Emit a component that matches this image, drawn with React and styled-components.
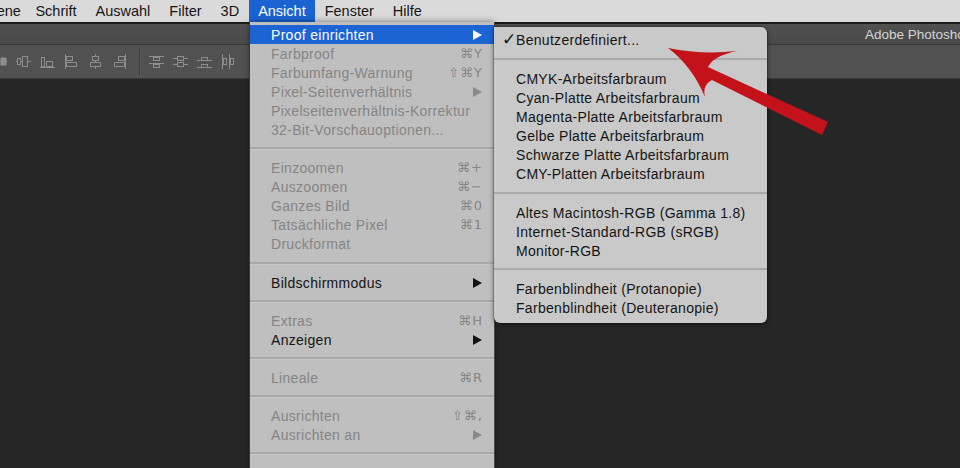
import React from "react";
import styled, { createGlobalStyle } from "styled-components";

const GlobalStyle = createGlobalStyle`
  html, body { margin: 0; padding: 0; background: #262626; overflow: hidden; }
  * { box-sizing: border-box; }
`;

const FONT = `"Liberation Sans", "DejaVu Sans", Arial, sans-serif`;

const Page = styled.div`
  position: relative;
  width: 960px;
  height: 468px;
  overflow: hidden;
  display: flex;
  flex-direction: column;
  background: #262626;
  font-family: ${FONT};
`;

const MenuBar = styled.div`
  height: 22px;
  flex: none;
  display: flex;
  align-items: stretch;
  background: #dadada;
  overflow: hidden;
`;

const MenuBarItem = styled.div`
  display: flex;
  align-items: center;
  padding: 0 9.5px;
  font-size: 14.5px;
  white-space: nowrap;
  color: ${(p) => (p.$active ? "#ffffff" : "#151515")};
  background: ${(p) => (p.$active ? "#1b63d3" : "transparent")};
  ${(p) => (p.$cut ? "margin-left: -21px; padding-left: 0; padding-right: 5px;" : "")}
`;

const TitleBar = styled.div`
  height: 23px;
  flex: none;
  border-top: 2px solid #1c1c1c;
  border-bottom: 1px solid #383838;
  background: linear-gradient(#515151, #494949);
  display: flex;
  align-items: center;
  justify-content: flex-end;
`;

const TitleText = styled.div`
  font-size: 13.5px;
  color: #d4d4d4;
  white-space: nowrap;
  margin-right: -28px;
  width: 123px;
  overflow: hidden;
`;

const OptionsBar = styled.div`
  height: 34px;
  flex: none;
  background: #515151;
  border-bottom: 1px solid #3a3a3a;
  display: flex;
  align-items: center;
  margin-left: -8px;
  gap: 9px;
`;

const ToolDivider = styled.div`
  width: 1px;
  height: 26px;
  background: #393939;
  box-shadow: 1px 0 0 #5d5d5d;
  margin-left: 3px;
`;

const Canvas = styled.div`
  flex: 1;
  background: #262626;
`;

const Dropdown = styled.div`
  position: absolute;
  left: 250px;
  top: 22px;
  width: 244px;
  height: 470px;
  background: #bfbfbf;
  padding-top: 3px;
  box-shadow: -1px 0 0 #3a3a3a, 1px 0 0 #4a4a4a, 0 0 6px rgba(0,0,0,0.5);
  display: flex;
  flex-direction: column;
  z-index: 2;
`;

const Submenu = styled.div`
  position: absolute;
  left: 494px;
  top: 27px;
  width: 273px;
  background: #c9c9c9;
  border-radius: 0 6px 6px 6px;
  padding: 3px 0 6px;
  box-shadow: 0 1px 5px rgba(0,0,0,0.55), 0 0 0 0.5px rgba(0,0,0,0.35);
  display: flex;
  flex-direction: column;
  z-index: 3;
`;

const Row = styled.div`
  height: 19px;
  flex: none;
  display: flex;
  align-items: center;
  padding: 0 12px 0 ${(p) => p.$indent || 21}px;
  font-size: 14px;
  letter-spacing: 0.3px;
  white-space: nowrap;
  color: ${(p) => (p.$active ? "#ffffff" : p.$disabled ? "#858585" : "#141414")};
  background: ${(p) => (p.$active ? "#1c63d4" : "transparent")};
`;

const Label = styled.span`
  flex: 1;
`;

const Check = styled.span`
  width: 14px;
  margin-left: -14px;
  font-size: 17px;
  line-height: 19px;
  font-family: "DejaVu Sans", sans-serif;
`;

const Shortcut = styled.span`
  font-family: "DejaVu Sans", "Liberation Sans", sans-serif;
  font-size: 13px;
  letter-spacing: 1px;
  margin-right: -1px;
`;

const Separator = styled.div`
  height: ${(p) => p.$h || 19}px;
  flex: none;
  display: flex;
  align-items: center;
  &::after {
    content: "";
    display: block;
    width: 100%;
    height: 2px;
    background: #a9a9a9;
    border-bottom: 1px solid #c6c6c6;
  }
`;

const ArrowOverlay = styled.svg`
  position: absolute;
  left: 0;
  top: 0;
  z-index: 5;
  pointer-events: none;
`;

const Tri = ({ color }) => (
  <svg width="9" height="10" viewBox="0 0 9 10">
    <polygon points="0,0 9,5 0,10" fill={color} />
  </svg>
);

const ICON = "#8d8d8d";
const ToolIcon = ({ kind }) => {
  const s = { stroke: ICON, strokeWidth: 1, fill: "none" };
  const shapes = {
    partial: (
      <>
        <line x1="0" y1="7.5" x2="15" y2="7.5" {...s} />
        <rect x="8.5" y="3.5" width="6" height="8" fill={ICON} />
      </>
    ),
    vcenter: (
      <>
        <line x1="0" y1="7.5" x2="15" y2="7.5" {...s} />
        <rect x="1.5" y="4.5" width="3" height="6" {...s} fill="#515151" />
        <rect x="6.5" y="2.5" width="5" height="10" {...s} fill="#515151" />
      </>
    ),
    bottom: (
      <>
        <line x1="0" y1="13.5" x2="15" y2="13.5" {...s} />
        <rect x="1.5" y="3.5" width="3" height="9" {...s} />
        <rect x="6.5" y="7.5" width="6" height="5" {...s} />
      </>
    ),
    left: (
      <>
        <line x1="1.5" y1="0" x2="1.5" y2="15" {...s} />
        <rect x="2.5" y="2.5" width="6" height="4" {...s} />
        <rect x="2.5" y="8.5" width="10" height="4" {...s} />
      </>
    ),
    hcenter: (
      <>
        <line x1="7.5" y1="0" x2="7.5" y2="15" {...s} />
        <rect x="4.5" y="2.5" width="6" height="4" {...s} fill="#515151" />
        <rect x="2.5" y="8.5" width="10" height="4" {...s} fill="#515151" />
      </>
    ),
    right: (
      <>
        <line x1="13.5" y1="0" x2="13.5" y2="15" {...s} />
        <rect x="6.5" y="2.5" width="6" height="4" {...s} />
        <rect x="2.5" y="8.5" width="10" height="4" {...s} />
      </>
    ),
    dtop: (
      <>
        <line x1="0" y1="2.5" x2="15" y2="2.5" {...s} />
        <line x1="0" y1="9.5" x2="15" y2="9.5" {...s} />
        <rect x="4.5" y="3.5" width="6" height="3" {...s} />
        <rect x="4.5" y="10.5" width="6" height="3" {...s} />
      </>
    ),
    dcenter: (
      <>
        <line x1="0" y1="4.5" x2="15" y2="4.5" {...s} />
        <line x1="0" y1="10.5" x2="15" y2="10.5" {...s} />
        <rect x="4.5" y="2.5" width="6" height="4" {...s} fill="#515151" />
        <rect x="4.5" y="8.5" width="6" height="4" {...s} fill="#515151" />
      </>
    ),
    dbottom: (
      <>
        <line x1="0" y1="6.5" x2="15" y2="6.5" {...s} />
        <line x1="0" y1="13.5" x2="15" y2="13.5" {...s} />
        <rect x="4.5" y="3.5" width="6" height="3" {...s} />
        <rect x="4.5" y="10.5" width="6" height="3" {...s} />
      </>
    ),
    dleft: (
      <>
        <line x1="1.5" y1="0" x2="1.5" y2="15" {...s} />
        <line x1="8.5" y1="0" x2="8.5" y2="15" {...s} />
        <rect x="2.5" y="4.5" width="3" height="6" {...s} />
        <rect x="9.5" y="4.5" width="3" height="6" {...s} />
      </>
    ),
  };
  return (
    <svg width="15" height="16" viewBox="0 0 15 16">
      {shapes[kind]}
    </svg>
  );
};

const mainMenu = [
  { label: "Proof einrichten", arrow: true, active: true },
  { label: "Farbproof", sc: "⌘Y", disabled: true },
  { label: "Farbumfang-Warnung", sc: "⇧⌘Y", disabled: true },
  { label: "Pixel-Seitenverhältnis", arrow: true, disabled: true },
  { label: "Pixelseitenverhältnis-Korrektur", disabled: true },
  { label: "32-Bit-Vorschauoptionen...", disabled: true },
  { sep: true },
  { label: "Einzoomen", sc: "⌘+", disabled: true },
  { label: "Auszoomen", sc: "⌘−", disabled: true },
  { label: "Ganzes Bild", sc: "⌘0", disabled: true },
  { label: "Tatsächliche Pixel", sc: "⌘1", disabled: true },
  { label: "Druckformat", disabled: true },
  { sep: true, h: 20 },
  { label: "Bildschirmmodus", arrow: true },
  { sep: true },
  { label: "Extras", sc: "⌘H", disabled: true },
  { label: "Anzeigen", arrow: true },
  { sep: true },
  { label: "Lineale", sc: "⌘R", disabled: true },
  { sep: true },
  { label: "Ausrichten", sc: "⇧⌘,", disabled: true },
  { label: "Ausrichten an", arrow: true, disabled: true },
  { sep: true },
];

const subMenu = [
  { label: "Benutzerdefiniert...", checked: true },
  { sep: true, h: 20 },
  { label: "CMYK-Arbeitsfarbraum" },
  { label: "Cyan-Platte Arbeitsfarbraum" },
  { label: "Magenta-Platte Arbeitsfarbraum" },
  { label: "Gelbe Platte Arbeitsfarbraum" },
  { label: "Schwarze Platte Arbeitsfarbraum" },
  { label: "CMY-Platten Arbeitsfarbraum" },
  { sep: true, h: 20 },
  { label: "Altes Macintosh-RGB (Gamma 1.8)" },
  { label: "Internet-Standard-RGB (sRGB)" },
  { label: "Monitor-RGB" },
  { sep: true },
  { label: "Farbenblindheit (Protanopie)" },
  { label: "Farbenblindheit (Deuteranopie)" },
];

const menuBarItems = [
  { label: "Ebene", cut: true },
  { label: "Schrift" },
  { label: "Auswahl" },
  { label: "Filter" },
  { label: "3D" },
  { label: "Ansicht", active: true },
  { label: "Fenster" },
  { label: "Hilfe" },
];

const renderItems = (items, indent) =>
  items.map((it, i) =>
    it.sep ? (
      <Separator key={i} $h={it.h} />
    ) : (
      <Row key={i} $active={it.active} $disabled={it.disabled} $indent={indent}>
        {it.checked !== undefined && <Check>✓</Check>}
        <Label>{it.label}</Label>
        {it.sc && <Shortcut>{it.sc}</Shortcut>}
        {it.arrow && (
          <Tri color={it.active ? "#ffffff" : it.disabled ? "#8a8a8a" : "#111111"} />
        )}
      </Row>
    )
  );

export default function App() {
  return (
    <>
      <GlobalStyle />
      <Page>
        <MenuBar>
          {menuBarItems.map((m) => (
            <MenuBarItem key={m.label} $active={m.active} $cut={m.cut}>
              {m.label}
            </MenuBarItem>
          ))}
        </MenuBar>
        <TitleBar>
          <TitleText>Adobe Photoshop CC</TitleText>
        </TitleBar>
        <OptionsBar>
          <ToolIcon kind="partial" />
          <ToolIcon kind="vcenter" />
          <ToolIcon kind="bottom" />
          <ToolIcon kind="left" />
          <ToolIcon kind="hcenter" />
          <ToolIcon kind="right" />
          <ToolDivider />
          <ToolIcon kind="dtop" />
          <ToolIcon kind="dcenter" />
          <ToolIcon kind="dbottom" />
          <ToolIcon kind="dleft" />
        </OptionsBar>
        <Canvas />
        <Dropdown>{renderItems(mainMenu, 21)}</Dropdown>
        <Submenu>{renderItems(subMenu, 22)}</Submenu>
        <ArrowOverlay width="960" height="468" viewBox="0 0 960 468">
          <path
            d="M668,48 Q702,55 737,51 Q713,56 708,67 L828,122 L822,135 L712,80 Q702,85 705,97 Q692,66 668,48 Z"
            fill="#c4121b"
          />
        </ArrowOverlay>
      </Page>
    </>
  );
}
